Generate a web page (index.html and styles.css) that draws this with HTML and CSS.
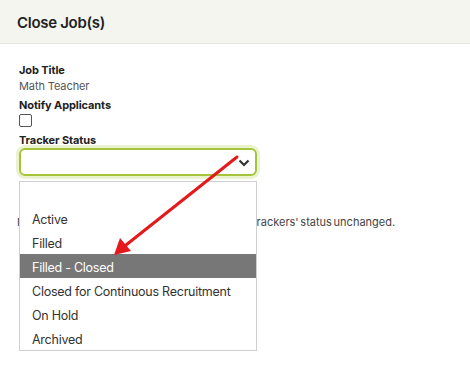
FILE: index.html
```html
<!DOCTYPE html>
<html>
<head>
<meta charset="utf-8">
<link rel="stylesheet" href="styles.css">
</head>
<body>
<div class="header"><h1 class="title">Close Job(s)</h1></div>
<div class="content">
  <div class="label">Job Title</div>
  <div class="value">Math Teacher</div>
  <div class="label gap">Notify Applicants</div>
  <div class="checkbox"></div>
  <div class="label gap2">Tracker Status</div>
  <div class="field">
    <div class="select">
      <svg class="chev" width="12" height="8" viewBox="0 0 12 8"><path d="M1.5 1.5 L6 6 L10.5 1.5" fill="none" stroke="#333" stroke-width="2.2"/></svg>
    </div>
    <ul class="menu">
      <li class="opt">&nbsp;</li>
      <li class="opt">Active</li>
      <li class="opt">Filled</li>
      <li class="opt sel">Filled - Closed</li>
      <li class="opt">Closed for Continuous Recruitment</li>
      <li class="opt">On Hold</li>
      <li class="opt">Archived</li>
    </ul>
  </div>
  <div class="note">Note: Leaving this field blank will keep all of the trackers' status unchanged.</div>
</div>
<svg class="arrow" width="470" height="382" viewBox="0 0 470 382">
  <line x1="237" y1="157" x2="126" y2="245" stroke="#e3191b" stroke-width="3" stroke-linecap="round"/>
  <polygon points="114,255 120,238 131,251" fill="#e3191b"/>
</svg>
</body>
</html>
```
FILE: styles.css
```css
html, body {
  margin: 0;
  padding: 0;
  background: #fff;
  font-family: Inter, "Open Sans", sans-serif;
  color: #222;
}
body {
  min-height: 382px;
  position: relative;
}
.header {
  box-sizing: border-box;
  height: 44px;
  background: #f3f5ee;
  border-bottom: 1px solid #e3e5dc;
  display: flex;
  align-items: center;
  padding-left: 17px;
  padding-top: 1px;
}
.title {
  margin: 0;
  font-size: 15px;
  font-weight: 600;
  color: #222;
  letter-spacing: -0.3px;
}
.content {
  padding: 18px 19px 160px 19px;
}
.label {
  font-size: 11px;
  font-weight: 700;
  line-height: 16px;
  color: #222;
  letter-spacing: -0.1px;
}
.value {
  font-size: 11px;
  line-height: 16px;
  color: #555;
  letter-spacing: -0.1px;
}
.gap { margin-top: 3px; }
.checkbox {
  width: 11px;
  height: 11px;
  border: 1px solid #555;
  border-radius: 2px;
  margin-top: 1px;
}
.gap2 { margin-top: 5px; }
.field {
  position: relative;
  width: 238px;
  z-index: 2;
}
.select {
  height: 24px;
  border: 2px solid #a6c43b;
  border-radius: 6px;
  box-shadow: 0 0 0 3px #eaf2cf;
  display: flex;
  align-items: center;
  justify-content: flex-end;
  padding-right: 5px;
}
.chev { display: block; margin-top: 1px; }
.menu {
  position: absolute;
  left: 0;
  top: 33px;
  width: 236px;
  margin: 0;
  padding: 0;
  list-style: none;
  border: 1px solid #cfcfcf;
  background: #fff;
}
.opt {
  display: block;
  height: 24px;
  line-height: 27px;
  overflow: hidden;
  padding-left: 12px;
  font-size: 12.5px;
  color: #333;
  letter-spacing: -0.25px;
  white-space: nowrap;
}
.opt.sel {
  background: #777;
  color: #fff;
}
.note {
  position: relative;
  z-index: 1;
  margin-left: -2px;
  margin-top: 38px;
  font-size: 11px;
  line-height: 16px;
  color: #444;
  letter-spacing: 0;
  word-spacing: -1.4px;
  white-space: nowrap;
}
.arrow {
  position: absolute;
  left: 0;
  top: 0;
  z-index: 3;
  pointer-events: none;
}
```
